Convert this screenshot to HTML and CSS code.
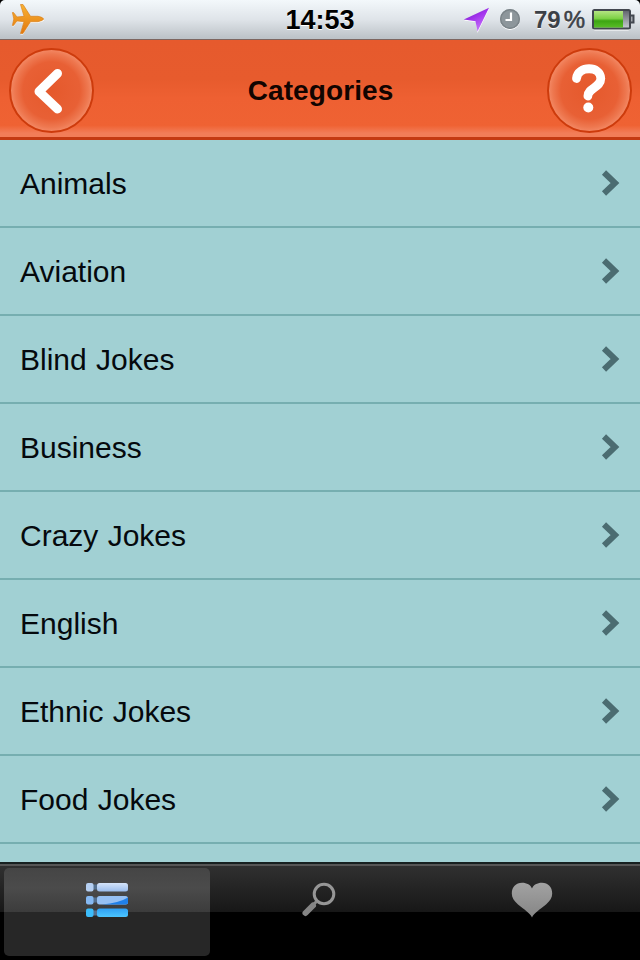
FILE: index.html
```html
<!DOCTYPE html>
<html lang="en">
<head>
<meta charset="utf-8">
<title>Categories</title>
<link rel="stylesheet" href="styles.css">
</head>
<body>
<div class="screen">
  <header class="status">
    <svg class="plane" width="36" height="36" viewBox="0 0 36 36" aria-hidden="true">
      <defs><linearGradient id="pg" x1="0" y1="0" x2="0" y2="1"><stop offset="0" stop-color="#f8b334"/><stop offset="1" stop-color="#e3780d"/></linearGradient></defs>
      <path transform="translate(0 1)" fill="#fff" d="M10.500 2.500H13L20.500 14.300H28Q34 15.500 34 17Q34 18.500 28 19.700H20.500L13 31.500H10.500L14 19.700L7 19L3.500 23.500H2.400L3.800 17L2.400 10.500H3.500L7 15L14 14.300Z"/>
      <path fill="url(#pg)" stroke="#d98320" stroke-width=".7" d="M10.500 2.500H13L20.500 14.300H28Q33.600 15.500 33.600 17Q33.600 18.500 28 19.700H20.500L13 31.500H10.500L14 19.700L7 19L3.500 23.500H2.400L3.800 17L2.400 10.500H3.500L7 15L14 14.300Z"/>
    </svg>
    <span class="time">14:53</span>
    <div class="indicators">
      <svg class="location" width="27" height="26" viewBox="0 0 27 26" aria-hidden="true">
        <defs><linearGradient id="lg" x1="0" y1="0" x2=".6" y2="1"><stop offset="0" stop-color="#6116b8"/><stop offset=".5" stop-color="#a334ed"/><stop offset="1" stop-color="#c779fa"/></linearGradient></defs>
        <path fill="#fff" d="M26 2L14.500 26L13 15L1 13.500Z"/>
        <path fill="url(#lg)" d="M26 .8L14.500 24.500L12.500 14.200L.8 12.500Z"/>
      </svg>
      <svg class="clock" width="22" height="23" viewBox="0 0 22 23" aria-hidden="true">
        <circle cx="11" cy="12" r="10" fill="#fff"/><circle cx="11" cy="11" r="10" fill="#8d969b"/><circle cx="11" cy="11" r="9.3" fill="none" stroke="#7b8489" stroke-width="1.4"/>
        <path d="M12 4.500V12H6.500" fill="none" stroke="#fff" stroke-width="2.2"/>
      </svg>
      <span class="percent"><span>79</span><span class="sign">%</span></span>
      <svg class="battery" width="43" height="22" viewBox="0 0 43 22" aria-hidden="true">
        <defs>
          <linearGradient id="bg" x1="0" y1="0" x2="0" y2="1"><stop offset="0" stop-color="#b4e482"/><stop offset=".45" stop-color="#7ed246"/><stop offset=".6" stop-color="#3da513"/><stop offset="1" stop-color="#58bd26"/></linearGradient>
          <linearGradient id="be" x1="0" y1="0" x2="0" y2="1"><stop offset="0" stop-color="#5d6269"/><stop offset="1" stop-color="#c9cdd3"/></linearGradient>
        </defs>
        <rect x="1" y="1.5" width="37" height="20" rx="2" fill="#fff"/>
        <rect x="1" y="1" width="37" height="18.500" rx="1.5" fill="url(#be)" stroke="#42474f" stroke-width="2"/>
        <rect x="2" y="2" width="29" height="16.500" fill="url(#bg)"/>
        <path d="M39 6.500H41.500V13.500H39" fill="#a5a9b0" stroke="#42474f" stroke-width="2"/>
      </svg>
    </div>
  </header>
  <nav class="navbar">
    <button class="round" aria-label="Back">
      <svg width="84" height="84" viewBox="0 0 84 84"><path d="M47.500 24.500L29 42.500L47.500 60" fill="none" stroke="#fff" stroke-width="9" stroke-linecap="round" stroke-linejoin="round"/></svg>
    </button>
    <h1>Categories</h1>
    <button class="round help" aria-label="Help">
      <svg width="84" height="84" viewBox="0 0 84 84"><path d="M28.500 30.500C30 17.500 52.500 17.500 52.800 30.500C52.800 39.500 40 40 39.900 48" fill="none" stroke="#fff" stroke-width="8.800" stroke-linecap="round"/><circle cx="40.300" cy="59.500" r="5" fill="#fff"/></svg>
    </button>
  </nav>
  <main class="list">
    <a class="row"><span>Animals</span><svg class="chev" width="20" height="28" viewBox="0 0 20 28"><path d="M3 3.500L14 14L3 24.500"/></svg></a>
    <a class="row"><span>Aviation</span><svg class="chev" width="20" height="28" viewBox="0 0 20 28"><path d="M3 3.500L14 14L3 24.500"/></svg></a>
    <a class="row"><span>Blind Jokes</span><svg class="chev" width="20" height="28" viewBox="0 0 20 28"><path d="M3 3.500L14 14L3 24.500"/></svg></a>
    <a class="row"><span>Business</span><svg class="chev" width="20" height="28" viewBox="0 0 20 28"><path d="M3 3.500L14 14L3 24.500"/></svg></a>
    <a class="row"><span>Crazy Jokes</span><svg class="chev" width="20" height="28" viewBox="0 0 20 28"><path d="M3 3.500L14 14L3 24.500"/></svg></a>
    <a class="row"><span>English</span><svg class="chev" width="20" height="28" viewBox="0 0 20 28"><path d="M3 3.500L14 14L3 24.500"/></svg></a>
    <a class="row"><span>Ethnic Jokes</span><svg class="chev" width="20" height="28" viewBox="0 0 20 28"><path d="M3 3.500L14 14L3 24.500"/></svg></a>
    <a class="row"><span>Food Jokes</span><svg class="chev" width="20" height="28" viewBox="0 0 20 28"><path d="M3 3.500L14 14L3 24.500"/></svg></a>
  </main>
  <footer class="tabs">
    <a class="tab active" aria-label="List">
      <svg width="44" height="38" viewBox="0 0 44 38">
        <defs>
          <linearGradient id="t1" x1="0" y1="0" x2="0" y2="1"><stop offset="0" stop-color="#d5e4fa"/><stop offset="1" stop-color="#9abcec"/></linearGradient>
          <linearGradient id="t3" x1="0" y1="0" x2="0" y2="1"><stop offset="0" stop-color="#2fa0f5"/><stop offset="1" stop-color="#4cc6ff"/></linearGradient>
        </defs>
        <path d="M7 5H13M7 18H13M7 31H13" stroke="#54708f" stroke-width="5"/>
        <rect x="1" y="1" width="7.5" height="8.5" rx="2" fill="#b5cff2"/><rect x="12" y="1" width="31" height="8.5" rx="2.5" fill="url(#t1)"/>
        <rect x="1" y="14" width="7.5" height="8.5" rx="2" fill="#86b9f2"/><rect x="12" y="14" width="31" height="8.5" rx="2.5" fill="#96c0f3"/>
        <path d="M17 22.500Q34 21 43 15.500V20Q43 22.500 40.500 22.500Z" fill="#1f80ea"/>
        <rect x="1" y="26.500" width="7.5" height="8.5" rx="2" fill="#3cbcfa"/><rect x="12" y="26.500" width="31" height="8.5" rx="2.5" fill="url(#t3)"/>
      </svg>
    </a>
    <a class="tab" aria-label="Search">
      <svg width="44" height="38" viewBox="0 0 44 38"><circle cx="28" cy="12" r="9.8" fill="none" stroke="#969696" stroke-width="3"/><path d="M20.500 19.500L17 23" stroke="#8b8b8b" stroke-width="3"/><path d="M17 23.500L9.500 31" stroke="#858585" stroke-width="6" stroke-linecap="round"/></svg>
    </a>
    <a class="tab" aria-label="Favourites">
      <svg width="44" height="38" viewBox="0 0 44 38"><defs><linearGradient id="hg" x1="0" y1="0" x2="0" y2="1"><stop offset="0" stop-color="#a2a2a2"/><stop offset="1" stop-color="#858585"/></linearGradient></defs><path fill="url(#hg)" d="M21 35.500C19 31 13 27.500 7 22.500C3 19 .8 15.500 .8 11.500C.8 5 5 .8 11 .8C16 .8 19.500 3 21 6.500C22.500 3 26 .8 31 .8C37 .8 41.200 5 41.200 11.500C41.200 15.500 39 19 35 22.500C29 27.500 23 31 21 35.500Z"/></svg>
    </a>
  </footer>
</div>
</body>
</html>
```
FILE: styles.css
```css
* { box-sizing: border-box; }
body { margin: 0; background: #000; font-family: "Liberation Sans", Arial, sans-serif; }
.screen { width: 640px; height: 960px; display: flex; flex-direction: column; overflow: hidden; border-radius: 5px 5px 0 0; }
.status {
  height: 40px; flex: none; display: grid; grid-template-columns: 1fr auto 1fr; align-items: center;
  background: linear-gradient(#f3f8fb, #dfe4e9 50%, #bdc3c8 97%);
  border-bottom: 1px solid #7d6660;
}
.plane { margin-left: 10px; }
.time { font-size: 27px; line-height: 38px; font-weight: bold; color: #000; text-shadow: 0 1px 0 #fff; }
.indicators { display: flex; justify-content: flex-end; align-items: center; padding-right: 5px; }
.location { margin-right: -1px; }
.clock { margin-left: 10px; }
.percent { display: flex; gap: 3px; margin: 0 7px 0 13px; font-size: 24px; line-height: 38px; font-weight: bold; color: #3c4147; text-shadow: 0 1px 0 #fff; }
.sign { font-weight: normal; -webkit-text-stroke: .6px #3c4147; }
.navbar {
  height: 100px; flex: none; display: flex; justify-content: space-between; align-items: center; padding: 0 8px 0 9px;
  background: linear-gradient(#e65a2d, #e75b2d 40%, #ee6032 60%, #ef6233 88%, #f27d58 96%);
  border-bottom: 3px solid #c43a12;
}
.navbar h1 { margin: 4px 0 0; font-size: 28px; line-height: 34px; letter-spacing: .1px; font-weight: bold; color: #120400; }
.round {
  width: 85px; height: 85px; padding: 0; border: 2px solid #cd3b0c; border-radius: 50%;
  display: flex; align-items: center; justify-content: center; margin-top: 4px;
  background: radial-gradient(circle, #e5592c 0, #e86035 50%, #ee7850 64%, #f28560 70%);
}
.round svg { flex: none; }
.round.help { margin-top: 3px; }
.list { flex: 1; min-height: 0; background: #a1d0d3; overflow: hidden; }
.row {
  height: 88px; display: flex; justify-content: space-between; align-items: center;
  padding: 0 19px 0 20px; border-bottom: 2px solid #76aeb0; font-size: 30px; line-height: 36px; word-spacing: 1px; color: #05090d;
}
.row span { margin-top: 2px; }
.chev path { fill: none; stroke: #4b6c71; stroke-width: 6; }
.tabs {
  height: 98px; flex: none; display: grid; grid-template-columns: 206px 1fr 1fr; padding: 4px 0 4px 4px;
  border-top: 2px solid #172020;
  background: linear-gradient(#565656 0 2px, #303030 2px, #171717 48px, #000 48px) padding-box, #000;
}
.tab { display: flex; justify-content: center; padding-top: 14px; }
.tab.active { border-radius: 5px; background: linear-gradient(#454545, #4b4b4b 20px, #3c3c3c 44px, #272727 44px, #272727); }
```
